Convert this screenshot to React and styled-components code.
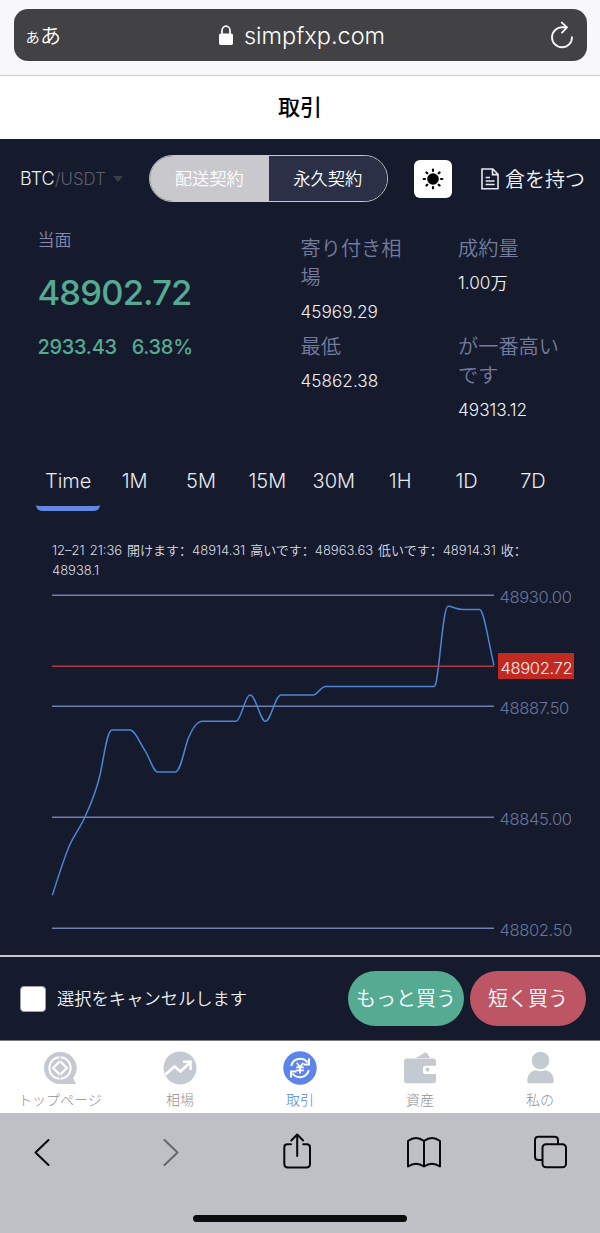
import React from "react";
import styled, { createGlobalStyle } from "styled-components";

const tabs = ["Time", "1M", "5M", "15M", "30M", "1H", "1D", "7D"];

const stats = [
  { label: "寄り付き相場", value: "45969.29" },
  { label: "成約量", value: "1.00万" },
  { label: "最低", value: "45862.38" },
  { label: "が一番高いです", value: "49313.12" },
];

const gridLines = [
  { y: 10.3, label: "48930.00" },
  { y: 121.3, label: "48887.50" },
  { y: 232.3, label: "48845.00" },
  { y: 343.3, label: "48802.50" },
];

const pricePath =
  "M52.3 310.3C58 293 64 273 70 259.3C75 249 80 243 85 231.7C91 219 96 207 100 190C104 172 107 145 112 145H130C135 145 140 158 145 165.7C150 173 153 187 158 187H175C181 187 184 164 188.5 152.7C192 145 196 136.3 203 136.3H236C241 136.3 245 110 250 110C256 110 260 136.3 265.5 136.3C271 136.3 275 110 281 110H313C318 110 320 101.5 326 101.5H434C436 101.5 437 93 438.5 81C441 62 444 21.3 448 21.3C453 21.3 456 24.5 463 24.5H479.5C484 24.5 488 55 494 80.5";

export default function App() {
  return (
    <Phone>
      <GlobalStyle />
      <AddressBar>
        <AddressField>
          <TextSize>
            <small>ぁ</small>あ
          </TextSize>
          <Address>
            <LockIcon />
            simpfxp.com
          </Address>
          <ReloadIcon />
        </AddressField>
      </AddressBar>
      <Title>取引</Title>
      <Main>
        <Toolbar>
          <Pair>
            <span>BTC</span>/USDT
            <Caret />
          </Pair>
          <Segment>
            <SegmentItem $active>配送契約</SegmentItem>
            <SegmentItem>永久契約</SegmentItem>
          </Segment>
          <ThemeBtn>
            <SunIcon />
          </ThemeBtn>
          <PositionLink>
            <DocIcon />
            倉を持つ
          </PositionLink>
        </Toolbar>
        <Summary>
          <Current>
            <CurrentLabel>当面</CurrentLabel>
            <CurrentPrice>48902.72</CurrentPrice>
            <Change>
              <span>2933.43</span>
              <span>6.38%</span>
            </Change>
          </Current>
          <StatGrid>
            {stats.map((s) => (
              <div key={s.label}>
                <StatLabel>{s.label}</StatLabel>
                <StatValue>{s.value}</StatValue>
              </div>
            ))}
          </StatGrid>
        </Summary>
        <Tabs>
          {tabs.map((t, i) => (
            <Tab key={t} $active={i === 0}>
              {t}
            </Tab>
          ))}
        </Tabs>
        <Info>
          12–21 21:36 開けます：48914.31 高いです：48963.63 低いです：48914.31 收：
          <br />
          48938.1
        </Info>
        <Chart />
      </Main>
      <OrderBar>
        <Checkbox />
        <CheckLabel>選択をキャンセルします</CheckLabel>
        <OrderBtn $color="#54ab91">もっと買う</OrderBtn>
        <OrderBtn $color="#bd5565">短く買う</OrderBtn>
      </OrderBar>
      <Nav>
        <NavItem>
          <HomeIcon />
          トップページ
        </NavItem>
        <NavItem>
          <MarketIcon />
          相場
        </NavItem>
        <NavItem $active>
          <TradeIcon />
          取引
        </NavItem>
        <NavItem>
          <WalletIcon />
          資産
        </NavItem>
        <NavItem>
          <UserIcon />
          私の
        </NavItem>
      </Nav>
      <BrowserBar>
        <BrowserButtons>
          <svg width="36" height="40" viewBox="0 0 36 40">
            <path d="M24.5 8L11.5 20.5L24.5 33" />
          </svg>
          <svg width="36" height="40" viewBox="0 0 36 40" opacity="0.48">
            <path d="M13.5 8L26.5 20.5L13.5 33" />
          </svg>
          <svg width="36" height="40" viewBox="0 0 36 40">
            <path d="M12 12.3H8.5Q5.3 12.3 5.3 15.5V31.5Q5.3 35.5 8.8 35.5H27.5Q31 35.5 31 31.5V15.5Q31 12.3 27.8 12.3H24.2M18.2 24V2.8M12.3 8.5L18.2 2.5L24.1 8.5" />
          </svg>
          <svg width="36" height="40" viewBox="0 0 36 40">
            <path d="M18 9Q10 3 2 9V34.5Q10 29 18 34.5Q26 29 34 34.5V9Q26 3 18 9V34.5" />
          </svg>
          <svg width="36" height="40" viewBox="0 0 36 40">
            <path d="M9 28H5.5Q2 28 2 24.5V8Q2 4.7 5.5 4.7H21.5Q25 4.7 25 8V12" />
            <rect x="9.5" y="12.2" width="23.5" height="23" rx="3.5" />
          </svg>
        </BrowserButtons>
        <HomeIndicator />
      </BrowserBar>
    </Phone>
  );
}

const Chart = () => (
  <ChartSvg viewBox="0 0 600 370">
    {gridLines.map((g) => (
      <g key={g.label}>
        <line x1="52" x2="494" y1={g.y} y2={g.y} stroke="#6e7fae" strokeWidth="1.6" />
        <text x="499.5" y={g.y + 7.7} fill="#69749a">
          {g.label}
        </text>
      </g>
    ))}
    <path d={pricePath} fill="none" stroke="#4c84d6" strokeWidth="1.5" />
    <line x1="52" x2="494" y1="81.2" y2="81.2" stroke="#b13a40" strokeWidth="1.5" />
    <rect x="498" y="68" width="76" height="26" fill="#c12a21" />
    <text x="500.5" y="89" fill="#fbeceb">
      48902.72
    </text>
  </ChartSvg>
);

const LockIcon = () => (
  <svg width="14" height="20" viewBox="0 0 14 20">
    <rect x="0" y="8.5" width="14" height="11.5" rx="1.8" fill="#fff" />
    <path d="M3 10V5.5a4 4.3 0 0 1 8 0V10" fill="none" stroke="#fff" strokeWidth="1.7" />
  </svg>
);

const ReloadIcon = () => (
  <svg width="24" height="28" viewBox="0 0 24 28" fill="none" stroke="#f4f4f4" strokeWidth="1.9" strokeLinecap="round" strokeLinejoin="round">
    <path d="M22 16.2A10 10 0 1 1 12.5 6.3H17M11.8 1.6L17 6.4L12 11.6" />
  </svg>
);

const SunIcon = () => (
  <svg width="22" height="22" viewBox="0 0 22 22">
    <circle cx="11" cy="11" r="5.8" fill="#000" />
    <g stroke="#000" strokeWidth="2.2" strokeLinecap="round">
      {[0, 45, 90, 135, 180, 225, 270, 315].map((a) => (
        <path key={a} d="M11 1.7V3" transform={`rotate(${a} 11 11)`} />
      ))}
    </g>
  </svg>
);

const DocIcon = () => (
  <svg width="18" height="22" viewBox="0 0 18 22" fill="none" stroke="#e8e9ee" strokeWidth="1.6">
    <path d="M1 1H11.8L17 6.3V20.8H1ZM11.5 1V6.6H17M4.6 9.5H9M4.6 13H13.6M4.6 16.5H13.6" />
  </svg>
);

const HomeIcon = () => (
  <svg width="34" height="34" viewBox="0 0 34 34">
    <path d="M17 1A16 16 0 1 0 17 33H33L30 27A16 16 0 0 0 17 1Z" fill="#c4c9d2" />
    <circle cx="17" cy="17" r="10.7" fill="none" stroke="#fff" strokeWidth="1.9" />
    <path d="M17 8.5L25.5 17L17 25.5L8.5 17Z" fill="#fff" />
    <path d="M17 11.7L22.3 17L17 22.3L11.7 17Z" fill="#c4c9d2" />
    <path d="M17 5V11M17 23V29" stroke="#c4c9d2" strokeWidth="1.2" />
  </svg>
);

const MarketIcon = () => (
  <svg width="34" height="34" viewBox="0 0 34 34">
    <circle cx="17" cy="17" r="16.5" fill="#c4c9d2" />
    <path d="M2.5 23.5L11.5 15.5L17.5 20.5L27 11.5" fill="none" stroke="#fff" strokeWidth="2.5" />
    <path d="M20 10.7H27.6V19" fill="none" stroke="#fff" strokeWidth="2.4" />
  </svg>
);

const TradeIcon = () => (
  <svg width="34" height="34" viewBox="0 0 34 34" fill="none" stroke="#fff" strokeWidth="2">
    <circle cx="17" cy="17" r="16.7" fill="#5d84ea" stroke="none" />
    <path d="M8.2 15A9.2 9.2 0 0 1 24.5 11.5M26 7.5V13.5H20.5M25.8 19A9.2 9.2 0 0 1 9.5 22.5M8 26.5V20.5H13.5" />
    <path d="M13.7 11.8L17 16L20.3 11.8M17 16V22.5M13.2 16.3H20.8M13.2 19.3H20.8" strokeWidth="1.7" />
  </svg>
);

const WalletIcon = () => (
  <svg width="34" height="34" viewBox="0 0 34 34">
    <path d="M13 7L21.5 1.7Q23.3 0.9 24.3 2.5L27 7Z" fill="#c4c9d2" />
    <path d="M4 7.5H30Q33 7.5 33 10.5V14.8H22.5Q20 14.8 20 17V20.5Q20 23 22.5 23H33V29Q33 32.3 30 32.3H4Q1 32.3 1 29V10.5Q1 7.5 4 7.5Z" fill="#c4c9d2" />
    <circle cx="24.5" cy="18.7" r="1.9" fill="#c4c9d2" />
  </svg>
);

const UserIcon = () => (
  <svg width="34" height="34" viewBox="0 0 34 34">
    <circle cx="17.5" cy="9.5" r="8.8" fill="#c4c9d2" />
    <path d="M4.2 30.3C4.2 23 9 19.3 13 19.3Q17.5 21 22 19.3C26 19.3 30.8 23 30.8 30.3Q30.8 32.3 28.8 32.3H6.2Q4.2 32.3 4.2 30.3Z" fill="#c4c9d2" />
  </svg>
);

const GlobalStyle = createGlobalStyle`
  body {
    margin: 0;
  }
  * {
    box-sizing: border-box;
  }
`;

const Phone = styled.div`
  display: flex;
  flex-direction: column;
  width: 600px;
  height: 1233px;
  overflow: hidden;
  background: #151b2d;
  font-family: Inter, "Noto Sans CJK JP", sans-serif;
  font-weight: 350;
  white-space: nowrap;
`;

const AddressBar = styled.div`
  height: 76px;
  padding: 9px 13px 0 14px;
  background: #f8f8fa;
  border-bottom: 1px solid #cdcdd0;
`;

const AddressField = styled.div`
  display: flex;
  align-items: center;
  justify-content: space-between;
  height: 52px;
  padding: 0 13px 0 10px;
  border-radius: 14px;
  background: #424244;
  color: #fff;
`;

const TextSize = styled.div`
  width: 60px;
  padding-bottom: 2px;
  font-size: 21px;

  small {
    margin-right: -1px;
    font-size: 17px;
  }
`;

const Address = styled.div`
  display: flex;
  align-items: center;
  gap: 11px;
  margin-right: -21px;
  margin-left: -51px;
  font-size: 23.5px;
`;

const Title = styled.div`
  height: 63px;
  background: white;
  color: #000;
  font-size: 22px;
  font-weight: 500;
  line-height: 62px;
  text-align: center;
`;

const Main = styled.div`
  height: 816px;
`;

const Toolbar = styled.div`
  display: flex;
  align-items: center;
  height: 79px;
  padding-left: 20px;
`;

const Pair = styled.div`
  display: flex;
  align-items: center;
  width: 129px;
  color: #5b606c;
  font-size: 16.8px;
  font-weight: 300;

  span {
    color: #eceef2;
    font-size: 18px;
  }
`;

const Caret = styled.div`
  margin-left: 7px;
  border: 5px solid transparent;
  border-top: 6px solid #393e49;
  border-bottom: 0;
`;

const Segment = styled.div`
  display: flex;
  width: 239px;
  height: 47px;
  border: 1.5px solid #c8c9d0;
  border-radius: 24px;
  overflow: hidden;
`;

const SegmentItem = styled.div`
  flex: 1;
  background: ${(props) => (props.$active ? "#c8c8cd" : "#2b3046")};
  color: #fff;
  font-size: 17.3px;
  line-height: 45px;
  text-align: center;
`;

const ThemeBtn = styled.div`
  display: flex;
  align-items: center;
  justify-content: center;
  width: 38px;
  height: 38px;
  margin-left: 26px;
  border-radius: 6px;
  background: white;
`;

const PositionLink = styled.div`
  display: flex;
  align-items: center;
  gap: 6px;
  margin-left: 29px;
  color: #f0f1f4;
  font-size: 20px;
`;

const Summary = styled.div`
  display: flex;
  height: 238px;
  padding-left: 37.5px;
`;

const Current = styled.div`
  width: 263px;
  padding-top: 8px;
  color: #54ab91;
`;

const CurrentLabel = styled.div`
  color: #8589ad;
  font-size: 17px;
  line-height: 28px;
`;

const CurrentPrice = styled.div`
  margin-top: 14px;
  font-size: 34.5px;
  font-weight: 450;
  line-height: 50px;
  letter-spacing: -0.8px;
`;

const Change = styled.div`
  display: flex;
  gap: 15px;
  margin-top: 14px;
  font-size: 20px;
  font-weight: 450;
  line-height: 30px;
  letter-spacing: -0.3px;
`;

const StatGrid = styled.div`
  display: grid;
  grid-template-columns: 105px 105px;
  column-gap: 52.5px;
  align-content: start;
  padding-top: 16px;
`;

const StatLabel = styled.div`
  color: #737b9e;
  font-size: 20.2px;
  line-height: 29px;
  white-space: normal;
`;

const StatValue = styled.div`
  color: #eef0f4;
  font-size: 17.2px;
  line-height: 40px;
`;

const Tabs = styled.div`
  display: grid;
  grid-template-columns: repeat(8, 66.4px);
  height: 83px;
  padding-left: 35px;
`;

const Tab = styled.div`
  height: 55px;
  margin: 0 1.2px;
  border-bottom: 5px solid ${(props) => (props.$active ? "#6288e6" : "transparent")};
  border-radius: 6px;
  color: #e8eaef;
  font-size: 20px;
  line-height: 50px;
  text-align: center;
`;

const Info = styled.div`
  height: 46px;
  padding: 1px 0 0 52px;
  color: #d9dce3;
  font-family: Inter, "Noto Sans CJK SC", sans-serif;
  font-size: 13px;
  line-height: 20px;
  word-spacing: 1.3px;
`;

const ChartSvg = styled.svg`
  display: block;
  width: 600px;
  height: 370px;
  font-size: 16.5px;
  font-weight: 300;
  letter-spacing: -0.35px;
`;

const OrderBar = styled.div`
  display: flex;
  align-items: center;
  height: 86px;
  padding: 0 14px 0 20px;
  border-top: 2px solid #c5c7d0;
  border-bottom: 1px solid #77777c;
`;

const Checkbox = styled.div`
  width: 26px;
  height: 26px;
  border: 1.5px solid #a0a1a8;
  border-radius: 4px;
  background: white;
`;

const CheckLabel = styled.div`
  flex: 1;
  margin-left: 11px;
  padding-bottom: 2px;
  color: #f0f1f4;
  font-size: 17.3px;
`;

const OrderBtn = styled.div`
  width: 116px;
  height: 55px;
  margin-left: 6px;
  border-radius: 28px;
  background: ${(props) => props.$color};
  color: #fff;
  font-size: 20px;
  line-height: 56px;
  text-align: center;
`;

const Nav = styled.div`
  display: flex;
  height: 72px;
  background: white;
`;

const NavItem = styled.div`
  display: flex;
  flex: 1;
  flex-direction: column;
  align-items: center;
  padding-top: 10px;
  color: ${(props) => (props.$active ? "#4f7fdc" : "#8f8f92")};
  font-size: 14px;
  font-weight: 300;
  line-height: 28px;

  svg {
    flex-shrink: 0;
    margin-bottom: 1px;
  }
`;

const BrowserBar = styled.div`
  display: flex;
  flex-direction: column;
  align-items: center;
  flex: 1;
  background: #bfc0c5;
`;

const BrowserButtons = styled.div`
  display: flex;
  justify-content: space-between;
  width: 545px;
  margin-right: 7px;
  padding-top: 19px;
  fill: none;
  stroke: #08080b;
  stroke-width: 2;
  stroke-linecap: round;
  stroke-linejoin: round;
`;

const HomeIndicator = styled.div`
  width: 214px;
  height: 7px;
  margin-top: 43px;
  border-radius: 4px;
  background: #0c0c0e;
`;
